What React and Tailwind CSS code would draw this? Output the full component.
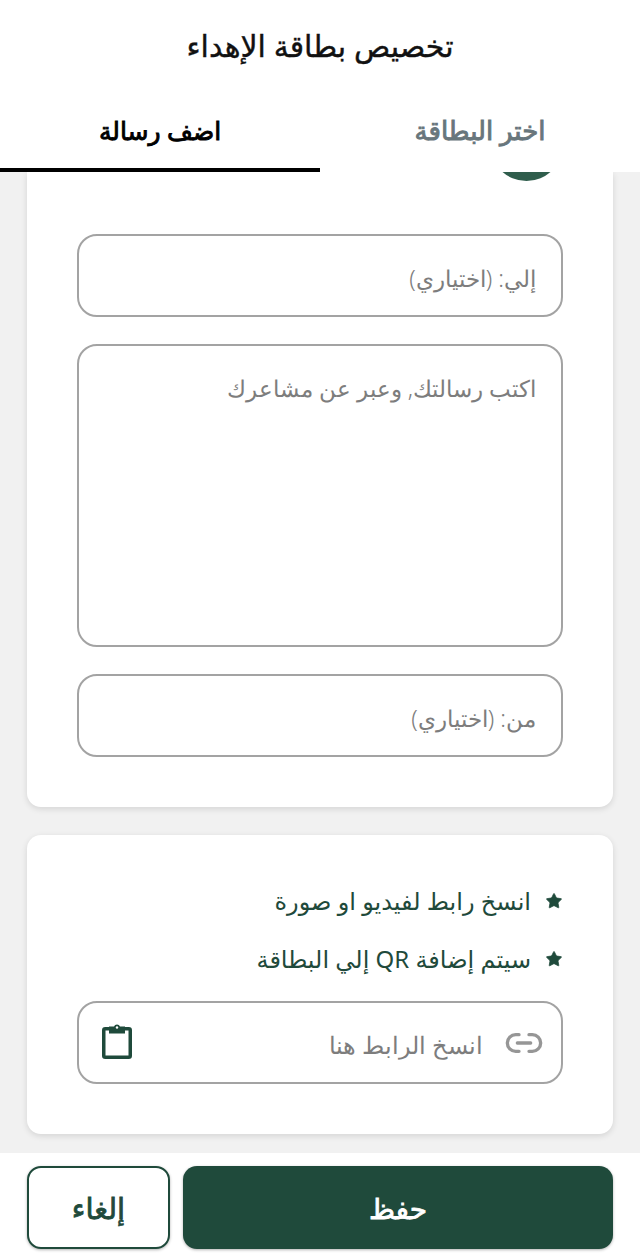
import { Link2, Star } from 'lucide-react';

const font = { fontFamily: '"Noto Sans", "DejaVu Sans", sans-serif' };

function Field({ label, className = 'h-[83px] items-center pt-[5px]' }) {
  return (
    <div className={`flex rounded-[20px] border-2 border-[#a3a3a3] px-[25px] text-[23.3px] font-light text-[#7d7d7d] ${className}`}>
      {label}
    </div>
  );
}

function Hint({ text }) {
  return (
    <div className="flex h-[58px] items-center gap-[14px] text-[24px] text-[#1f4a3b]">
      <Star size={18} fill="#1f4a3b" strokeWidth={1} />
      <span>{text}</span>
    </div>
  );
}

function Clipboard() {
  return (
    <svg width="30" height="36" viewBox="0 0 30 36" fill="none">
      <rect x="1.75" y="5.75" width="26.5" height="28.5" rx="1.5" stroke="#1f4a3b" strokeWidth="3.5" />
      <path d="M7 3.5h5a3.2 3.2 0 0 1 6 0h5v7H7z" fill="#1f4a3b" />
      <circle cx="15" cy="4.5" r="1.2" fill="#fff" />
    </svg>
  );
}

export default function App() {
  return (
    <div dir="rtl" style={font} className="flex h-[1256px] w-[640px] flex-col overflow-hidden bg-white">
      <header className="flex h-[94px] shrink-0 items-center justify-center pb-[3px] text-[30px] text-[#111] [-webkit-text-stroke:0.4px_#111]">
        تخصيص بطاقة الإهداء
      </header>
      <nav className="flex h-[78px] shrink-0">
        <div className="flex w-1/2 items-center justify-center pb-[5px] text-[26px] text-[#68767c] [-webkit-text-stroke:0.9px_#68767c]">اختر البطاقة</div>
        <div className="flex w-1/2 items-center justify-center border-b-[4px] border-black pb-[1px] text-[25px] text-black [-webkit-text-stroke:0.9px_#000]">اضف رسالة</div>
      </nav>
      <main className="flex flex-1 flex-col gap-[28px] overflow-hidden bg-[#f1f1f1] px-[27px]">
        <section className="rounded-b-[14px] bg-white px-[50px] pb-[50px] shadow-[0_2px_6px_rgba(0,0,0,0.12)]">
          <div className="-mt-[64px] mb-[53px] h-[73px] w-[73px] rounded-full bg-[#2f5d4c]" />
          <div className="flex flex-col gap-[27px]">
            <Field label="إلي: (اختياري)" />
            <Field label="اكتب رسالتك, وعبر عن مشاعرك" className="h-[303px] items-start pt-[25px]" />
            <Field label="من: (اختياري)" />
          </div>
        </section>
        <section className="rounded-[14px] bg-white px-[50px] pt-[37px] pb-[50px] shadow-[0_2px_6px_rgba(0,0,0,0.12)]">
          <Hint text="انسخ رابط لفيديو او صورة" />
          <Hint text="سيتم إضافة QR إلي البطاقة" />
          <div className="mt-[13px] flex h-[83px] items-center justify-between rounded-[20px] border-2 border-[#a3a3a3] pr-[17px] pl-[23px]">
            <div className="flex items-center gap-[21px] text-[24px] font-light text-[#7d7d7d]">
              <Link2 size={40} color="#969696" />
              <span className="pt-[5px]">انسخ الرابط هنا</span>
            </div>
            <div className="-mt-[4px]">
              <Clipboard />
            </div>
          </div>
        </section>
      </main>
      <footer className="flex h-[103px] shrink-0 gap-[13px] px-[27px] pt-[13px]">
        <button className="h-[83px] flex-1 rounded-[14px] bg-[#1f4a3b] text-[28px] text-white shadow-[0_1px_3px_rgba(0,0,0,0.3)] [-webkit-text-stroke:0.8px_#fff]">
          حفظ
        </button>
        <button className="h-[83px] w-[143px] rounded-[14px] border-2 border-[#1f4a3b] bg-white text-[29px] text-[#1f4a3b] shadow-[0_1px_3px_rgba(0,0,0,0.3)] [-webkit-text-stroke:0.8px_#1f4a3b]">
          إلغاء
        </button>
      </footer>
    </div>
  );
}
